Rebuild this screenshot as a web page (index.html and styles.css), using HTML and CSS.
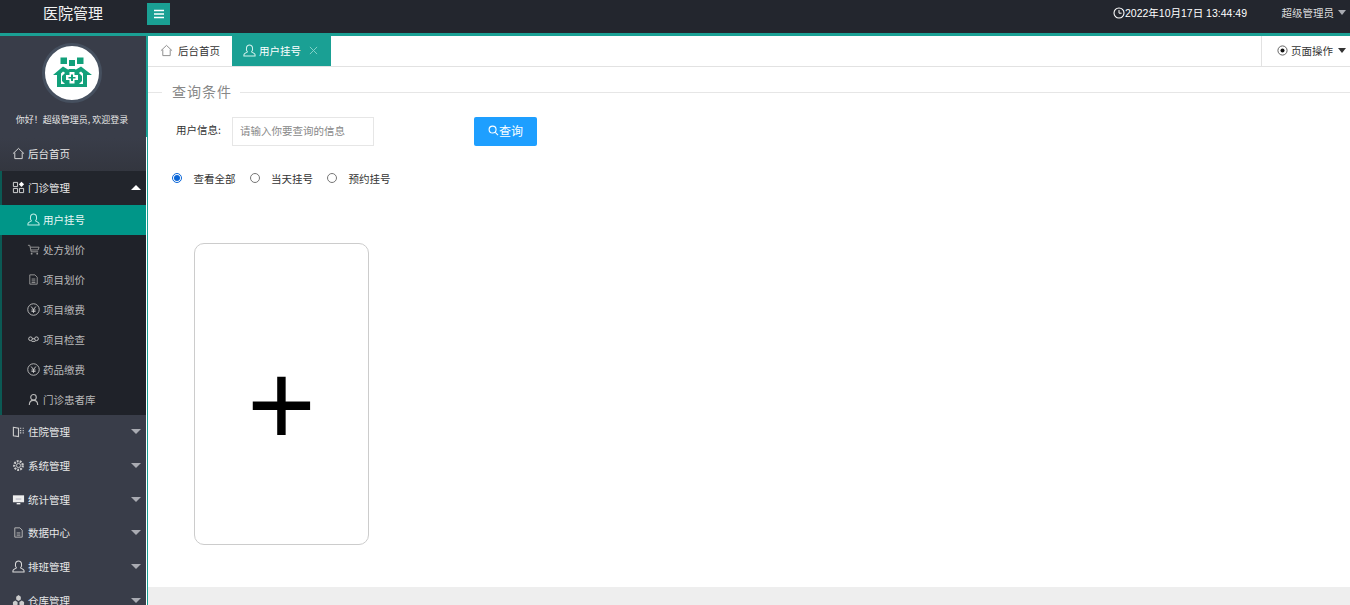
FILE: index.html
```html
<!DOCTYPE html>
<html lang="zh-CN">
<head>
<meta charset="utf-8">
<title>医院管理</title>
<link rel="stylesheet" href="styles.css">
</head>
<body>
<div class="app">
  <header class="topbar">
    <div class="brand">医院管理</div>
    <button class="toggle" type="button" aria-label="菜单">
      <svg viewBox="0 0 12 10" width="12" height="10"><path d="M1 1.500h10M1 5h10M1 8.500h10" stroke="#fff" stroke-width="1.400" fill="none"/></svg>
    </button>
    <div class="top-right">
      <span class="clock">
        <svg viewBox="0 0 12 12" width="12" height="12"><circle cx="6" cy="6" r="5" fill="none" stroke="#fff" stroke-width="1.100"/><path d="M6 3v3.200h2.600" fill="none" stroke="#fff" stroke-width="1"/></svg>2022年10月17日 13:44:49
      </span>
      <span class="user">超级管理员<i class="caret caret-gray"></i></span>
    </div>
  </header>
  <div class="main">
    <aside class="sidebar">
      <div class="side-inner">
        <div class="profile">
          <div class="avatar">
            <svg viewBox="0 0 41 32" width="41" height="32">
              <g fill="#12a07a">
                <rect x="8.500" y="0.500" width="6.500" height="6.500"/>
                <rect x="17" y="3" width="6" height="6"/>
                <rect x="25" y="0.500" width="6.500" height="6.500"/>
                <path d="M1 18l10-8.500 9 5.500 9-5.500L40 18h-5v12H5V18z"/>
                <path d="M9 27V16.500l2-2 9 6 9-6 2 2V27z" fill="#fff"/>
                <path d="M17 12h6l7 7v5l-6 6h-8l-6-6v-5z"/>
                <path d="M17.500 15h5v3h3.500v5h-3.500v3.500h-5V23H14v-5h3.500z" fill="#fff"/>
                <path d="M19 17.500h2V20h2.500v1.500H21V24h-2v-2.500h-2.500V20H19z"/>
              </g>
            </svg>
          </div>
          <p class="welcome">你好！超级管理员, 欢迎登录</p>
        </div>
        <nav class="menu">
          <a class="item item-home">
            <svg class="ico" viewBox="0 0 14 14"><path d="M1 7.200L7 1.500l6 5.700M3 6v6.500h8V6" fill="none" stroke="#ddd" stroke-width="1"/></svg>后台首页
          </a>
          <div class="group">
            <a class="item item-open">
              <svg class="ico" viewBox="0 0 14 14"><path d="M1.500 1.500h4.500v4.500H1.500zM1.500 8h4.500v4.500H1.500zM8 8h4.500v4.500H8z" fill="none" stroke="#ddd"/><path d="M10.200.8l2.800 2.800-2.800 2.800-2.800-2.800z" fill="#fff"/></svg>门诊管理<i class="caret caret-up"></i>
            </a>
            <div class="sub">
              <a class="sub-item active">
                <svg class="ico" viewBox="0 0 14 14"><path d="M4.700 8.300C2.800 5.500 3.500 1 7 1s4.200 4.500 2.300 7.300c0 .9 3.700 1.400 3.700 3.400V13H1v-1.300c0-2 3.700-2.500 3.700-3.400z" fill="none" stroke="#bfeee6" stroke-width="1.100"/></svg>用户挂号
              </a>
              <a class="sub-item">
                <svg class="ico" viewBox="0 0 14 14"><path d="M1 2.500h2l1.500 7H12M3.500 4.500H13l-1 3H4.200" fill="none" stroke="#999"/><circle cx="5" cy="11.500" r="1" fill="#999"/><circle cx="11" cy="11.500" r="1" fill="#999"/></svg>处方划价
              </a>
              <a class="sub-item">
                <svg class="ico" viewBox="0 0 14 14"><path d="M3 2h5.500L11 4.500V12H3zM5 6.500h4M5 8.500h4M5 10.300h4" fill="none" stroke="#999"/></svg>项目划价
              </a>
              <a class="sub-item">
                <svg class="ico" viewBox="0 0 14 14"><circle cx="7" cy="7" r="6.200" fill="none" stroke="#bbb"/><path d="M4.500 3.800L7 7l2.500-3.200M7 7v3.600M4.800 7.500h4.400M4.800 9h4.400" fill="none" stroke="#ccc"/></svg>项目缴费
              </a>
              <a class="sub-item">
                <svg class="ico" viewBox="0 0 14 14"><circle cx="3.800" cy="6.200" r="2" fill="none" stroke="#ccc"/><circle cx="10.200" cy="6.200" r="2" fill="none" stroke="#ccc"/><path d="M5.800 6.200h2.400M5 9h4" stroke="#ccc" fill="none"/></svg>项目检查
              </a>
              <a class="sub-item">
                <svg class="ico" viewBox="0 0 14 14"><circle cx="7" cy="7" r="6.200" fill="none" stroke="#bbb"/><path d="M4.500 3.800L7 7l2.500-3.200M7 7v3.600M4.800 7.500h4.400M4.800 9h4.400" fill="none" stroke="#ccc"/></svg>药品缴费
              </a>
              <a class="sub-item">
                <svg class="ico" viewBox="0 0 14 14"><circle cx="7" cy="4.600" r="3" fill="none" stroke="#bbb" stroke-width="1.200"/><path d="M2.500 13c0-3 2-5 4.500-5s4.500 2 4.500 5" fill="none" stroke="#bbb" stroke-width="1.200"/></svg>门诊患者库
              </a>
            </div>
          </div>
          <a class="item item-rest">
            <svg class="ico" viewBox="0 0 14 14"><path d="M1.500 2.500L7 3.500v9l-5.500-1z" fill="none" stroke="#ccc" stroke-width="1.200"/><path d="M8.500 3.500h1.500M8.500 6h1.500M8.500 8.500h1.500M11.500 3.500h1.200M11.500 6h1.200M11.500 8.500h1.200" stroke="#ccc" stroke-width="1.200"/></svg>住院管理<i class="caret"></i>
          </a>
          <a class="item item-rest">
            <svg class="ico" viewBox="0 0 14 14"><circle cx="7" cy="7" r="4.600" fill="none" stroke="#ccc" stroke-width="2.400" stroke-dasharray="2 1.200"/><circle cx="7" cy="7" r="2.200" fill="none" stroke="#ccc"/></svg>系统管理<i class="caret"></i>
          </a>
          <a class="item item-rest">
            <svg class="ico" viewBox="0 0 14 14"><path d="M1 2.500h12v7.500H1z" fill="#eee"/><path d="M5 11.500h4" stroke="#eee" stroke-width="1.500"/><path d="M4 6.500h6" stroke="#99a" stroke-width=".8"/></svg>统计管理<i class="caret"></i>
          </a>
          <a class="item item-rest">
            <svg class="ico" viewBox="0 0 14 14"><path d="M3 2h5.500L11 4.500V12H3zM5 7.500h4M5 9.800h4" fill="none" stroke="#bbb"/></svg>数据中心<i class="caret"></i>
          </a>
          <a class="item item-rest">
            <svg class="ico" viewBox="0 0 14 14"><path d="M4.700 8.300C2.800 5.500 3.500 1 7 1s4.200 4.500 2.300 7.300c0 .9 3.700 1.400 3.700 3.400V13H1v-1.300c0-2 3.700-2.500 3.700-3.400z" fill="none" stroke="#ddd" stroke-width="1.100"/></svg>排班管理<i class="caret"></i>
          </a>
          <a class="item item-rest">
            <svg class="ico" viewBox="0 0 14 14"><path d="M7 1l2.500 2v3L7 7.500 4.500 6V3zM3.500 7L6 8.500v3L3.500 13 1 11.500v-3zM10.500 7L13 8.500v3L10.500 13 8 11.500v-3z" fill="#ccc"/></svg>仓库管理<i class="caret"></i>
          </a>
        </nav>
      </div>
    </aside>
    <section class="content">
      <div class="tabs">
        <a class="tab">
          <svg class="ico" viewBox="0 0 14 14"><path d="M1 7.200L7 1.500l6 5.700M3 6v6.500h8V6" fill="none" stroke="#888" stroke-width="1"/></svg>后台首页
        </a>
        <a class="tab tab-active">
          <svg class="ico" viewBox="0 0 14 14"><path d="M4.700 8.300C2.800 5.500 3.500 1 7 1s4.200 4.500 2.300 7.300c0 .9 3.700 1.400 3.700 3.400V13H1v-1.300c0-2 3.700-2.500 3.700-3.400z" fill="none" stroke="#d6f3ee" stroke-width="1.100"/></svg>用户挂号
          <svg class="close" viewBox="0 0 10 10" width="9" height="9"><path d="M1 1l8 8M9 1l-8 8" stroke="#8fd6cd" stroke-width="1" fill="none"/></svg>
        </a>
        <div class="page-ops">
          <svg viewBox="0 0 12 12" width="11" height="11"><circle cx="6" cy="6" r="5" fill="none" stroke="#555"/><circle cx="6" cy="6" r="2.200" fill="#111"/></svg>页面操作<i class="caret caret-dark"></i>
        </div>
      </div>
      <div class="panel">
        <div class="legend"><span class="legend-text">查询条件</span></div>
        <form class="query">
          <label class="q-label" for="info">用户信息:</label>
          <input class="q-input" id="info" type="text" placeholder="请输入你要查询的信息">
          <button class="q-btn" type="button">
            <svg viewBox="0 0 12 12" width="11" height="11"><circle cx="5" cy="5" r="3.800" fill="none" stroke="#fff" stroke-width="1.200"/><path d="M8 8l3 3" stroke="#fff" stroke-width="1.200"/></svg>查询
          </button>
        </form>
        <div class="radios">
          <label class="radio"><input type="radio" name="scope" checked>查看全部</label>
          <label class="radio"><input type="radio" name="scope">当天挂号</label>
          <label class="radio"><input type="radio" name="scope">预约挂号</label>
        </div>
        <div class="add-card">+</div>
      </div>
      <footer class="foot"></footer>
    </section>
  </div>
</div>
</body>
</html>
```
FILE: styles.css
```css
* { box-sizing: border-box; }
html, body { margin: 0; height: 100%; overflow: hidden; }
body {
  font-family: "Noto Sans CJK SC", "Liberation Sans", sans-serif;
  font-size: 10.5px;
  color: #333;
  background: #fff;
}
.app { height: 605px; display: flex; flex-direction: column; }

.topbar {
  height: 36px;
  flex: none;
  display: flex;
  background: #23262e;
  border-bottom: 3px solid #1aa094;
  color: #fff;
}
.brand {
  width: 147px;
  padding-left: 43px;
  font-size: 15px;
  line-height: 25px;
  color: #f2f2f2;
}
.toggle {
  width: 23px;
  height: 22px;
  margin-top: 3px;
  padding: 0;
  border: 0;
  background: #1aa094;
  display: flex;
  align-items: center;
  justify-content: center;
}
.top-right {
  margin-left: auto;
  display: flex;
  align-items: center;
  height: 25px;
  padding-right: 4px;
  gap: 34.5px;
}
.clock {
  display: flex;
  align-items: center;
  font-family: "Liberation Sans", "Noto Sans CJK SC", sans-serif;
  color: #fff;
}
.user { display: flex; align-items: center; color: #ddd; }

.caret {
  display: block;
  width: 0;
  height: 0;
  border-left: 5px solid transparent;
  border-right: 5px solid transparent;
  border-top: 5px solid #a9abb2;
}
.caret-gray { margin-left: 4px; border-left-width: 4.500px; border-right-width: 4.500px; }
.caret-dark { margin-left: 2px; border-top-color: #333; border-left-width: 4.500px; border-right-width: 4.500px; }
.caret-up { border-top: 0; border-bottom: 5px solid #fff; }

.main { flex: 1; min-height: 0; display: flex; }

.sidebar {
  width: 148px;
  flex: none;
  overflow: hidden;
  border-right: 1px solid #1aa094;
  background: linear-gradient(#1aa094 0 101px, #fff 101px);
}
.side-inner { width: 146px; height: 100%; overflow: hidden; background: #393d49; }
.profile {
  height: 102px;
  display: flex;
  flex-direction: column;
  align-items: center;
  padding: 7px 2px 0 0;
}
.avatar {
  width: 60px;
  height: 60px;
  flex: none;
  border-radius: 50%;
  background: #fff;
  border: 3px solid #46505f;
  display: flex;
  align-items: center;
  justify-content: center;
}
.welcome { margin: 10px 0 0; font-size: 9px; line-height: 14px; color: #e6e6e6; white-space: nowrap; }

.item {
  display: flex;
  align-items: center;
  padding: 0 5px 2px 12px;
  color: #e8e8e8;
}
.item .caret { margin-left: auto; }
.item-home { height: 33px; background: linear-gradient(#393d49, #33363f); }
.item-open { height: 34px; background: #22252c; border-left: 2px solid #0b5a54; padding-left: 10px; }
.item-rest { height: 33.700px; padding-bottom: 0; }
.ico { width: 13px; height: 13px; flex: none; margin-right: 3px; }
.sub { background: #1f2229; border-left: 2px solid #0b5a54; }
.sub-item {
  height: 30px;
  display: flex;
  align-items: center;
  padding: 0 0 2px 25px;
  color: #b9b9b9;
}
.sub-item.active { margin-left: -2px; padding-left: 27px; background: #009688; color: #e9f7f5; }

.content { flex: 1; min-width: 0; display: flex; flex-direction: column; }
.tabs {
  height: 31px;
  flex: none;
  display: flex;
  border-bottom: 1px solid #e2e2e2;
}
.tab {
  display: flex;
  align-items: center;
  width: 84px;
  padding: 0 0 2px 12px;
  color: #333;
}
.tab .ico { margin-right: 5px; }
.tab-active { width: 99px; padding-left: 11px; background: #1aa094; color: #fff; }
.tab-active .ico { margin-right: 3px; }
.close { margin-left: 8px; }
.page-ops {
  margin-left: auto;
  width: 89px;
  padding: 0 0 2px 15px;
  border-left: 1px solid #e2e2e2;
  display: flex;
  align-items: center;
  gap: 3px;
  color: #333;
  white-space: nowrap;
}

.panel { flex: 1; min-height: 0; }
.legend {
  height: 18px;
  margin-top: 15px;
  display: flex;
  align-items: center;
  padding-left: 14px;
  background: linear-gradient(#e6e6e6, #e6e6e6) 0 10px / 100% 1px no-repeat;
}
.legend-text {
  padding: 0 8px 0 10px;
  background: #fff;
  font-size: 14px;
  letter-spacing: 1px;
  line-height: 18px;
  color: #888;
}
.query {
  display: flex;
  align-items: center;
  height: 29px;
  margin-top: 17px;
  padding-left: 28px;
}
.q-label { width: 56px; padding-bottom: 4px; color: #333; }
.q-input {
  width: 142px;
  height: 29px;
  padding: 0 7px 2px;
  border: 1px solid #e6e6e6;
  font: inherit;
  font-size: 10.500px;
  color: #333;
  outline: 0;
}
.q-input::placeholder { color: #888; opacity: 1; }
.q-btn {
  width: 63px;
  height: 29px;
  margin-left: 100px;
  padding: 0 0 2px;
  border: 0;
  border-radius: 2px;
  background: #1e9fff;
  color: #fff;
  font: inherit;
  font-size: 12px;
  display: flex;
  align-items: center;
  justify-content: center;
}
.radios {
  display: flex;
  margin-top: 24px;
  padding-left: 24px;
  height: 16px;
  gap: 14px;
}
.radio { display: flex; align-items: center; color: #333; }
.radio input { width: 10px; height: 10px; margin: 0 11.500px 0 0; accent-color: #0a66d8; }

.add-card {
  width: 175px;
  height: 302px;
  margin: 57px 0 0 46px;
  border: 1px solid #ccc;
  border-radius: 10px;
  display: flex;
  align-items: center;
  justify-content: center;
  font-family: "Liberation Sans", sans-serif;
  font-size: 118px;
  line-height: 1;
  color: #000;
  padding-top: 20px;
}
.foot { height: 18px; flex: none; background: #eee; }
```
